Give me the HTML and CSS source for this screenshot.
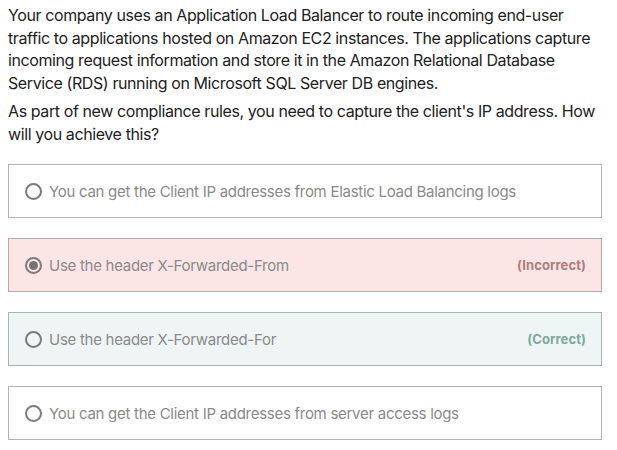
FILE: index.html
```html
<!DOCTYPE html>
<html>
<head>
<meta charset="utf-8">
<link rel="stylesheet" href="styles.css">
</head>
<body>
<div class="quiz">
  <p class="q">Your company uses an Application Load Balancer to route incoming end-user traffic to applications hosted on Amazon EC2 instances. The applications capture incoming request information and store it in the Amazon Relational Database Service (RDS) running on Microsoft SQL Server DB engines.</p>
  <p class="q q2">As part of new compliance rules, you need to capture the client's IP address. How will you achieve this?</p>
  <div class="options">
    <div class="opt">
      <span class="radio"></span>
      <span class="label">You can get the Client IP addresses from Elastic Load Balancing logs</span>
    </div>
    <div class="opt wrong">
      <span class="radio checked"></span>
      <span class="label">Use the header X-Forwarded-From</span>
      <span class="tag">(Incorrect)</span>
    </div>
    <div class="opt right">
      <span class="radio"></span>
      <span class="label">Use the header X-Forwarded-For</span>
      <span class="tag">(Correct)</span>
    </div>
    <div class="opt">
      <span class="radio"></span>
      <span class="label">You can get the Client IP addresses from server access logs</span>
    </div>
  </div>
</div>
</body>
</html>
```
FILE: styles.css
```css
html, body {
  margin: 0;
  padding: 0;
  background: #fff;
}
body {
  padding: 4px 8px 0 8px;
  font-family: Inter, "Liberation Sans", sans-serif;
}
.quiz {
  width: 594px;
}
.q {
  margin: 0;
  font-size: 16px;
  line-height: 22.5px;
  color: #222;
  letter-spacing: -0.4px;
}
.q2 {
  margin-top: 6px;
}
.options {
  margin-top: 19px;
  display: flex;
  flex-direction: column;
  gap: 20px;
}
.opt {
  box-sizing: border-box;
  height: 54px;
  border: 1px solid #b4b4b4;
  display: flex;
  align-items: center;
  padding: 0 15px 0 16px;
  color: #8a8a8a;
  font-size: 15px;
  letter-spacing: -0.28px;
}
.opt.wrong {
  background: #fbe6e5;
  border-color: #b3aaa9;
}
.opt.right {
  background: #eef5f4;
  border-color: #adb1b0;
}
.radio {
  box-sizing: border-box;
  width: 17px;
  height: 17px;
  border: 2px solid #7c7c7c;
  border-radius: 50%;
  margin-right: 7px;
  display: flex;
  align-items: center;
  justify-content: center;
  flex: none;
}
.radio.checked::after {
  content: "";
  width: 9px;
  height: 9px;
  border-radius: 50%;
  background: #7a7272;
}
.label {
  flex: 1;
}
.tag {
  font-size: 13px;
  font-weight: bold;
  letter-spacing: 0.1px;
}
.wrong .tag {
  color: #b07d7b;
}
.right .tag {
  color: #7aaa9c;
}
```
